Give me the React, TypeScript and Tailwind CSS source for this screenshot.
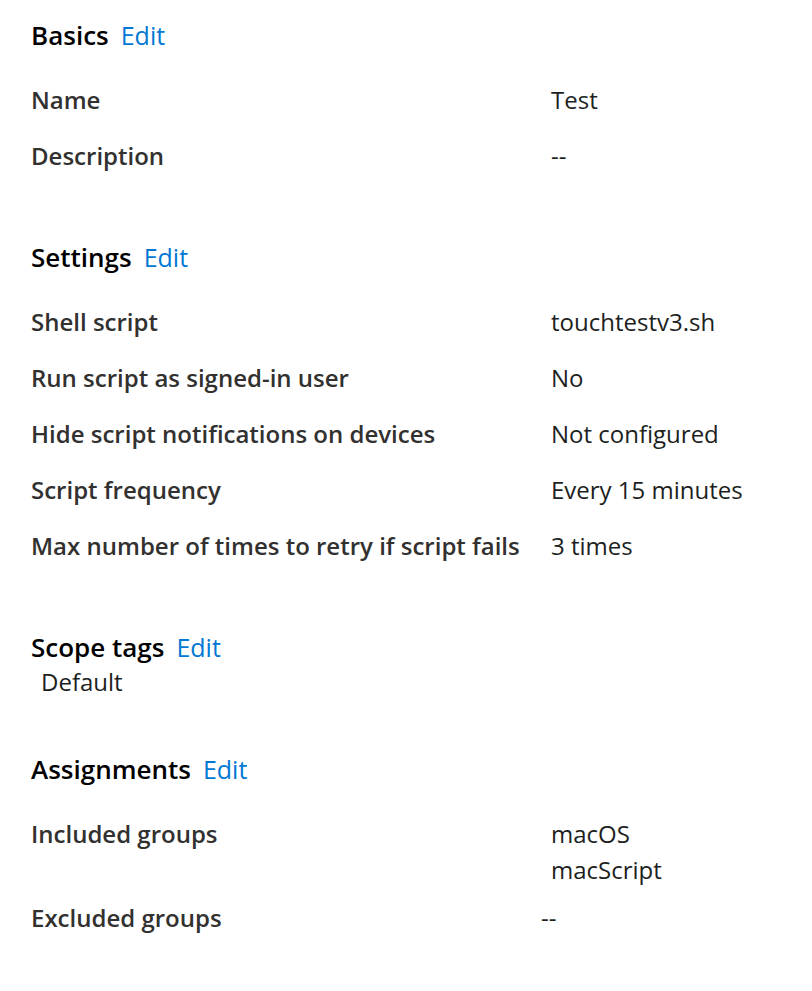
type Row = {
  label: string;
  values: string[];
  shift?: boolean;
};

type Section = {
  title: string;
  rows?: Row[];
  tags?: string[];
};

const sections: Section[] = [
  {
    title: "Basics",
    rows: [
      { label: "Name", values: ["Test"] },
      { label: "Description", values: ["--"] },
    ],
  },
  {
    title: "Settings",
    rows: [
      { label: "Shell script", values: ["touchtestv3.sh"] },
      { label: "Run script as signed-in user", values: ["No"] },
      { label: "Hide script notifications on devices", values: ["Not configured"] },
      { label: "Script frequency", values: ["Every 15 minutes"] },
      { label: "Max number of times to retry if script fails", values: ["3 times"] },
    ],
  },
  {
    title: "Scope tags",
    tags: ["Default"],
  },
  {
    title: "Assignments",
    rows: [
      { label: "Included groups", values: ["macOS", "macScript"] },
      { label: "Excluded groups", values: ["--"], shift: true },
    ],
  },
];

const SectionHeading = ({ title }: { title: string }) => (
  <div className="flex items-center gap-[12px] h-[40px] leading-[40px]">
    <span className="text-[26px] font-semibold text-black">{title}</span>
    <a href="#" className="text-[25px] text-[#0078d4]">
      Edit
    </a>
  </div>
);

const DetailRow = ({ row }: { row: Row }) => (
  <div className={`flex ${row.values.length > 1 ? "pt-[10px] pb-[2px]" : "py-[10px]"}`}>
    <div className="w-[520px] shrink-0 whitespace-nowrap text-[24px] leading-[36px] font-semibold text-[#323130]">
      {row.label}
    </div>
    <div className={`flex flex-col text-[24px] leading-[36px] text-[#201f1e] ${row.shift ? "-ml-[10px]" : ""}`}>
      {row.values.map((v) => (
        <span key={v}>{v}</span>
      ))}
    </div>
  </div>
);

export default function App() {
  return (
    <div
      className="min-h-screen bg-white pl-[31px] pt-[15px]"
      style={{ fontFamily: '"Open Sans", "Noto Sans", sans-serif' }}
    >
      {sections.map((s, i) => (
        <section key={s.title} className={i === 0 ? "" : i === 3 ? "mt-[52px]" : "mt-[53px]"}>
          <SectionHeading title={s.title} />
          {s.rows && (
            <div className="mt-[17px]">
              {s.rows.map((r) => (
                <DetailRow key={r.label} row={r} />
              ))}
            </div>
          )}
          {s.tags && (
            <div className="pl-[10px] text-[24px] leading-[30px] text-[#201f1e]">
              {s.tags.map((t) => (
                <div key={t}>{t}</div>
              ))}
            </div>
          )}
        </section>
      ))}
    </div>
  );
}
